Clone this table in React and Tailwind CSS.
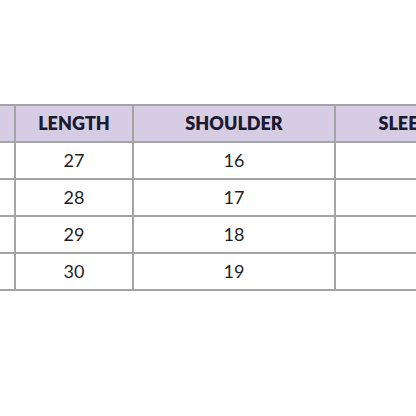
import { Fragment } from "react";

export default function App() {
  const rows = [
    ["27", "16"],
    ["28", "17"],
    ["29", "18"],
    ["30", "19"],
  ];

  return (
    <div
      className="w-[416px] h-[416px] overflow-hidden bg-white pt-[104px]"
      style={{ fontFamily: "Lato, 'Open Sans', sans-serif" }}
    >
      <div className="grid w-[484px] grid-cols-[14px_116px_200px_148px] auto-rows-[35px] gap-[2px] bg-[#a4a4a4] py-[2px]">
        <div className="bg-[#d6cde4]" />
        <div className="bg-[#d6cde4] flex items-center justify-center text-[18px] font-extrabold text-[#1c1a2e]">LENGTH</div>
        <div className="bg-[#d6cde4] flex items-center justify-center text-[18px] font-extrabold text-[#1c1a2e]">SHOULDER</div>
        <div className="bg-[#d6cde4] flex items-center justify-center text-[18px] font-extrabold text-[#1c1a2e]">SLEEVE</div>
        {rows.map((r) => (
          <Fragment key={r[0]}>
            <div className="bg-white" />
            <div className="bg-white flex items-center justify-center text-[18px] text-[#1f1f1f]">{r[0]}</div>
            <div className="bg-white flex items-center justify-center text-[18px] text-[#1f1f1f]">{r[1]}</div>
            <div className="bg-white" />
          </Fragment>
        ))}
      </div>
    </div>
  );
}
